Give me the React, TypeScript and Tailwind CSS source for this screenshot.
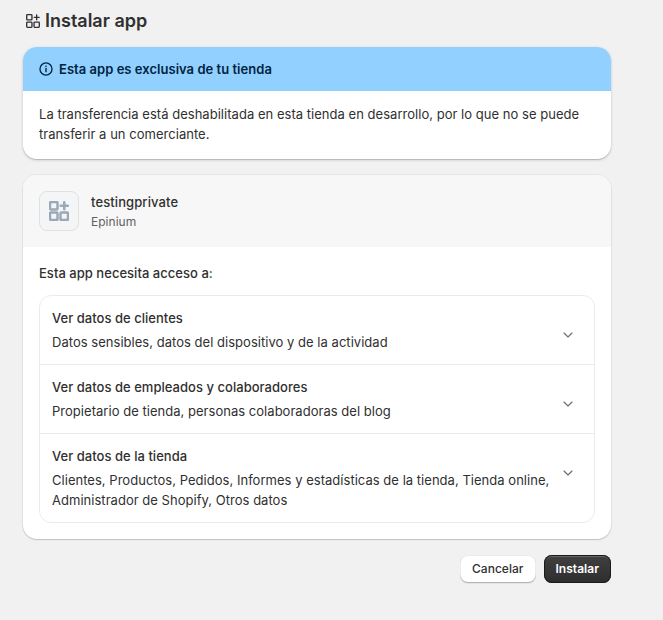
import React from 'react';
import { ChevronDown } from 'lucide-react';

const AppsIcon = ({ className, weight = 2 }: { className: string; weight?: number }) => (
  <svg viewBox="0 0 20 20" fill="none" stroke="currentColor" strokeWidth={weight} className={className}>
    <rect x="1" y="1" width="7.5" height="7.5" rx="1" />
    <rect x="1" y="11.5" width="7.5" height="7.5" rx="1" />
    <rect x="11.5" y="11.5" width="7.5" height="7.5" rx="1" />
    <path d="M15.25 1.2v7.1M11.7 4.75h7.1" strokeLinecap="round" />
  </svg>
);

const InfoIcon = () => (
  <svg viewBox="0 0 16 16" fill="none" stroke="currentColor" className="w-[14px] h-[14px] shrink-0">
    <circle cx="8" cy="8" r="6.9" strokeWidth="1.5" />
    <path d="M8 7.4v3.6" strokeWidth="1.6" strokeLinecap="round" />
    <circle cx="8" cy="4.9" r="0.95" fill="currentColor" stroke="none" />
  </svg>
);

interface Scope {
  title: string;
  detail: string;
}

const scopes: Scope[] = [
  { title: 'Ver datos de clientes', detail: 'Datos sensibles, datos del dispositivo y de la actividad' },
  { title: 'Ver datos de empleados y colaboradores', detail: 'Propietario de tienda, personas colaboradoras del blog' },
  {
    title: 'Ver datos de la tienda',
    detail: 'Clientes, Productos, Pedidos, Informes y estadísticas de la tienda, Tienda online, Administrador de Shopify, Otros datos',
  },
];

export default function App() {
  return (
    <div className="min-h-[620px] bg-[#f1f1f1] pl-[23px] pr-[52px] pt-[10px] text-[13px] leading-[20px] tracking-[0.03px] text-[#303030] font-['Inter',sans-serif]">
      <div className="flex items-center gap-[5px] h-[22px] pl-[3px]">
        <AppsIcon className="w-[14px] h-[14px]" weight={1.9} />
        <h1 className="text-[18px] leading-[22px] tracking-normal font-semibold">Instalar app</h1>
      </div>

      <div className="mt-[15px] rounded-[14px] bg-white overflow-hidden shadow-[0_1px_0_0_rgba(0,0,0,0.1),0_1px_3px_0_rgba(0,0,0,0.2)]">
        <div className="h-[44px] flex items-center gap-[6px] px-[16px] bg-[#91d0ff] text-[#00243f] font-semibold">
          <InfoIcon />
          <span>Esta app es exclusiva de tu tienda</span>
        </div>
        <p className="px-[16px] pt-[13px] pb-[15px]">
          La transferencia está deshabilitada en esta tienda en desarrollo, por lo que no se puede transferir a un comerciante.
        </p>
      </div>

      <div className="mt-[16px] rounded-[14px] bg-white overflow-hidden shadow-[0_1px_0_0_rgba(0,0,0,0.08),0_0_0_1px_rgba(0,0,0,0.04),0_1px_2px_0_rgba(0,0,0,0.1)]">
        <div className="h-[72px] flex items-center gap-[12px] px-[16px] bg-[#f7f7f7]">
          <div className="w-[40px] h-[40px] rounded-[8px] border border-[#e0e0e0] bg-[#f4f5f6] flex items-center justify-center text-[#9aa8b8]">
            <AppsIcon className="w-[20px] h-[20px]" weight={2.5} />
          </div>
          <div>
            <div className="font-medium tracking-[0.1px]">testingprivate</div>
            <div className="text-[12px] leading-[18px] mt-[1px] text-[#616161]">Epinium</div>
          </div>
        </div>
        <div className="px-[16px] pt-[16px] pb-[16px]">
          <h2 className="font-medium">Esta app necesita acceso a:</h2>
          <div className="mt-[12px] rounded-[12px] border border-[#ebebeb] divide-y divide-[#ebebeb]">
            {scopes.map((scope) => (
              <div key={scope.title} className="flex items-start pl-[12px] pr-[18px] py-[12px]">
                <div className="flex-1">
                  <div className="font-medium">{scope.title}</div>
                  <div className="mt-[4px]">{scope.detail}</div>
                </div>
                <ChevronDown className="w-[16px] h-[16px] mt-[19px] ml-[8px] shrink-0 text-[#6f6f6f]" strokeWidth={1.75} />
              </div>
            ))}
          </div>
        </div>
      </div>

      <div className="mt-[16px] flex justify-end gap-[8px]">
        <button className="h-[28px] px-[12px] rounded-[8px] bg-white text-[12px] font-medium shadow-[0_1px_0_0_#e3e3e3,inset_0_-1px_0_0_#b5b5b5,inset_0_0_0_1px_rgba(0,0,0,0.08)]">
          Cancelar
        </button>
        <button className="h-[28px] px-[12px] rounded-[8px] bg-[linear-gradient(#404040,#2e2e2e)] text-white text-[12px] font-semibold shadow-[inset_0_0_0_1px_#1a1a1a,inset_0_2px_0_0_rgba(255,255,255,0.2)]">
          Instalar
        </button>
      </div>
    </div>
  );
}
